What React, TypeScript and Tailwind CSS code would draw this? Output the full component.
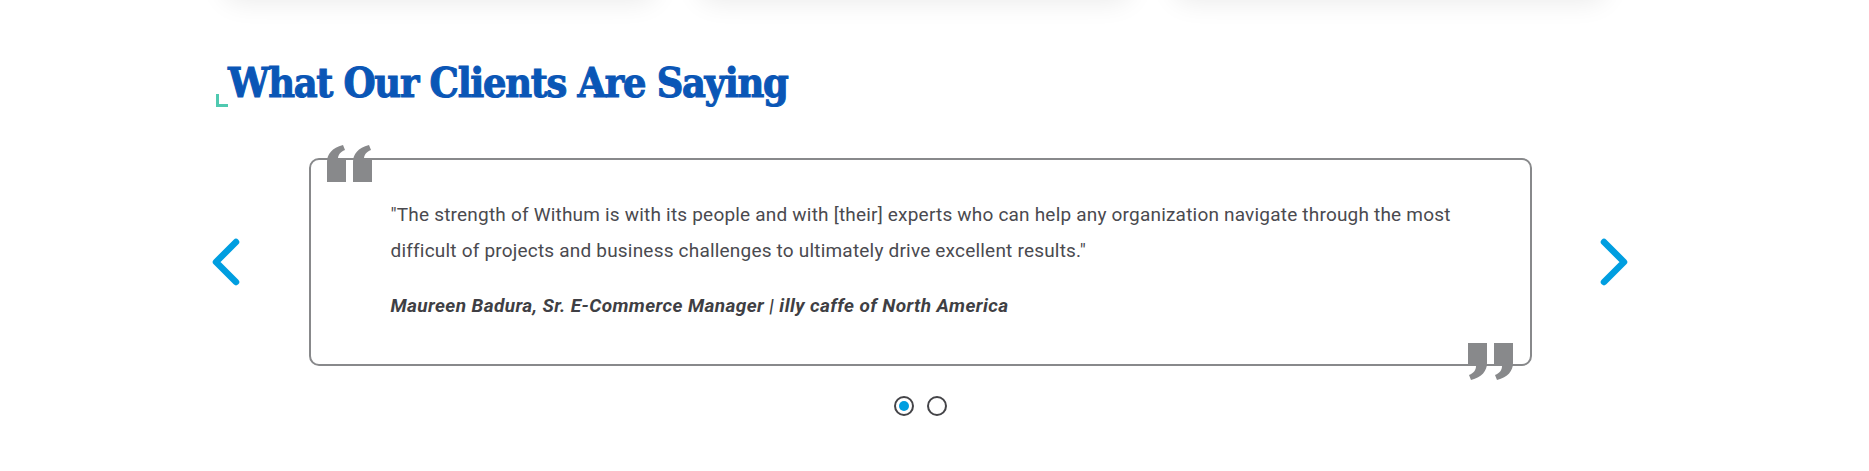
import React from "react";

function OpenQuote({ className }: { className?: string }) {
  return (
    <svg className={className} width="46" height="37" viewBox="0 0 46 37" fill="#88898b">
      <path d="M0 37 V17 C0 9 5 3 16 0 L18 5 C13 7 11 10 11 14 H19 V37 Z" />
      <path d="M26 37 V17 C26 9 31 3 42 0 L44 5 C39 7 37 10 37 14 H45 V37 Z" />
    </svg>
  );
}

function Chevron({ dir }: { dir: "left" | "right" }) {
  return (
    <svg width="29" height="48" viewBox="0 0 29 48" fill="none">
      <polyline
        points={dir === "left" ? "25,4 5,24 25,44" : "4,4 24,24 4,44"}
        stroke="#009ee0"
        strokeWidth="6.5"
        strokeLinecap="round"
        strokeLinejoin="round"
      />
    </svg>
  );
}

export default function App() {
  return (
    <div className="relative w-full h-[471px] overflow-hidden bg-white">
      {/* cards from the section above */}
      <div className="flex gap-[45px] ml-[225px] -mt-[80px] h-[75px]">
        <div className="w-[430px] h-full rounded-[14px] bg-white shadow-[0_6px_28px_rgba(0,0,0,0.09)]" />
        <div className="w-[430px] h-full rounded-[14px] bg-white shadow-[0_6px_28px_rgba(0,0,0,0.09)]" />
        <div className="w-[430px] h-full rounded-[14px] bg-white shadow-[0_6px_28px_rgba(0,0,0,0.09)]" />
      </div>

      <div className="ml-[200px] w-[1440px] pt-[64px]">
        <div className="flex items-end">
          <div className="ml-[16px] mb-[0px] w-[12px] h-[13px] border-l-[3px] border-b-[3px] border-[#4fc9b0]" />
          <h2 className="text-[#0a56b6] text-[41px] leading-[48px] font-bold tracking-[-1.3px] [font-stretch:condensed] [-webkit-text-stroke:1px_#0a56b6] [font-family:'DejaVu_Serif_Condensed','DejaVu_Serif',serif]">
            What Our Clients Are Saying
          </h2>
        </div>

        <div className="mt-[51px] flex items-center justify-between px-[11px]">
          <button className="w-[29px] h-[48px] flex items-center justify-center">
            <Chevron dir="left" />
          </button>

          <div className="relative w-[1223px] h-[208px] border-2 border-[#88898b] rounded-[10px] pl-[80px] pr-[50px] pt-[37px] [font-family:Roboto,'Liberation_Sans',sans-serif]">
            <OpenQuote className="absolute left-[16px] -top-[15px]" />
            <OpenQuote className="absolute right-[17px] -bottom-[16px] rotate-180" />
            <p className="text-[19px] leading-[36px] text-[#4a4a4f] tracking-[0.2px]">
              "The strength of Withum is with its people and with [their] experts who can help any organization navigate through the most difficult of projects and business challenges to ultimately drive excellent results."
            </p>
            <p className="mt-[19px] text-[19px] leading-[36px] text-[#3f3f44] font-bold italic tracking-[0.4px]">
              Maureen Badura, Sr. E-Commerce Manager | illy caffe of North America
            </p>
          </div>

          <button className="w-[29px] h-[48px] flex items-center justify-center">
            <Chevron dir="right" />
          </button>
        </div>

        <div className="mt-[30px] flex justify-center gap-[13px]">
          <span className="w-5 h-5 rounded-full border-2 border-[#444448] flex items-center justify-center">
            <span className="w-[10px] h-[10px] rounded-full bg-[#009ee0]" />
          </span>
          <span className="w-5 h-5 rounded-full border-2 border-[#444448]" />
        </div>
      </div>
    </div>
  );
}
